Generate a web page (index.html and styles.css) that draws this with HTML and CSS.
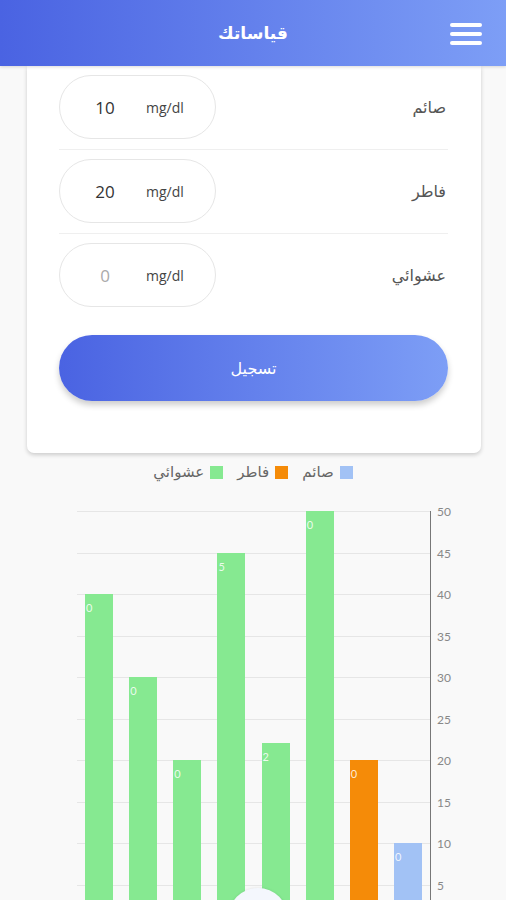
FILE: index.html
```html
<!DOCTYPE html>
<html lang="ar">
<head>
<meta charset="UTF-8">
<title>قياساتك</title>
<link rel="stylesheet" href="styles.css">
</head>
<body>
<div class="header">
  <h1>قياساتك</h1>
  <button class="menu" aria-label="menu"><span></span><span></span><span></span></button>
</div>

<div class="card">
  <div class="row">
    <div class="pill"><span class="value">10</span><span class="unit">mg/dl</span></div>
    <label>صائم</label>
  </div>
  <div class="row">
    <div class="pill"><span class="value">20</span><span class="unit">mg/dl</span></div>
    <label>فاطر</label>
  </div>
  <div class="row last">
    <div class="pill"><span class="value empty">0</span><span class="unit">mg/dl</span></div>
    <label>عشوائي</label>
  </div>
  <button class="submit">تسجيل</button>
</div>

<div class="chart">
  <div class="legend">
    <div class="item"><i class="sw blue"></i>صائم</div>
    <div class="item"><i class="sw orange"></i>فاطر</div>
    <div class="item"><i class="sw green"></i>عشوائي</div>
  </div>
  <div class="plot-area">
    <div class="plot">
      <div class="slot"><div class="bar green" style="height:332px"><span>0</span></div></div>
      <div class="slot"><div class="bar green" style="height:249px"><span>0</span></div></div>
      <div class="slot"><div class="bar green" style="height:166px"><span>0</span></div></div>
      <div class="slot"><div class="bar green" style="height:373px"><span>5</span></div></div>
      <div class="slot"><div class="bar green" style="height:183px"><span>2</span></div></div>
      <div class="slot"><div class="bar green" style="height:415px"><span>0</span></div></div>
      <div class="slot"><div class="bar orange" style="height:166px"><span>0</span></div></div>
      <div class="slot"><div class="bar blue" style="height:83px"><span>0</span></div></div>
    </div>
    <div class="axis">
      <span>50</span><span>45</span><span>40</span><span>35</span><span>30</span>
      <span>25</span><span>20</span><span>15</span><span>10</span><span>5</span>
    </div>
  </div>
</div>

<div class="fab"></div>
</body>
</html>
```

FILE: styles.css
```css
body { margin: 0; background: #f9f9f9; font-family: "Open Sans", "DejaVu Sans", sans-serif; color: #444; overflow: hidden; }

.header { height: 66px; background: linear-gradient(to right, #4a63e2, #7d9ef6); display: flex; align-items: center; justify-content: center; position: relative; box-shadow: 0 1px 3px rgba(0,0,0,0.15); }
.header h1 { margin: 0; color: #fff; font-size: 17px; font-weight: bold; font-family: "DejaVu Sans", sans-serif; }
.menu { position: absolute; right: 24px; top: 23px; width: 32px; height: 22px; padding: 0; border: 0; background: none; display: flex; flex-direction: column; justify-content: space-between; }
.menu span { display: block; height: 4px; border-radius: 2px; background: #fff; }

.card { margin: 0 25px 0 27px; background: #fff; border-radius: 0 0 7px 7px; box-shadow: 0 2px 4px rgba(0,0,0,0.18); padding: 0 33px 52px 32px; }
.row { display: flex; align-items: center; justify-content: space-between; padding: 9px 0 10px; border-bottom: 1px solid #efefef; }
.row.last { border-bottom: 0; }
.row label { font-size: 16px; color: #555; font-family: "DejaVu Sans", sans-serif; margin-right: 2px; }
.pill { width: 125px; height: 62px; border: 1px solid #e6e6e6; border-radius: 32px; display: flex; align-items: center; padding-left: 30px; }
.pill .value { width: 30px; text-align: center; font-size: 17px; color: #333; }
.pill .value.empty { color: #aaa; }
.pill .unit { margin-left: 26px; font-size: 14px; color: #444; }

.submit { display: block; width: 100%; height: 66px; margin-top: 18px; border: 0; border-radius: 33px; background: linear-gradient(to right, #4a63e2, #7d9ef6); color: #fff; font-size: 16px; font-family: "DejaVu Sans", sans-serif; box-shadow: 0 4px 6px rgba(0,0,0,0.2); }

.chart { padding-top: 10px; }
.legend { display: flex; direction: rtl; justify-content: center; gap: 14px; font-size: 15px; color: #666; font-family: "DejaVu Sans", sans-serif; }
.legend .item { display: flex; align-items: center; gap: 6px; }
.sw { display: inline-block; width: 13px; height: 13px; }
.sw.blue, .bar.blue { background: #a2c2f5; }
.sw.orange, .bar.orange { background: #f58b08; }
.sw.green, .bar.green { background: #86e991; }

.plot-area { display: flex; margin-top: 30px; }
.plot { margin-left: 77px; width: 353px; height: 415px; display: flex; align-items: flex-end; background: repeating-linear-gradient(to bottom, #e6e6e6 0 1px, transparent 1px 41.5px); }
.slot { flex: 1; display: flex; justify-content: center; align-items: flex-end; height: 100%; }
.bar { width: 28px; }
.bar span { display: block; margin: 7px 0 0 1px; font-size: 11px; color: rgba(255,255,255,0.85); font-family: "Lato", sans-serif; }
.axis { border-left: 1.5px solid #777; height: 415px; display: flex; flex-direction: column; padding-left: 6px; }
.axis span { flex-shrink: 0; height: 41.5px; line-height: 14px; margin-top: -6px; margin-bottom: 6px; font-size: 12px; color: #888; font-family: "Lato", sans-serif; }

.fab { position: absolute; left: 228px; top: 888px; width: 60px; height: 60px; border-radius: 50%; background: #f4f7fd; box-shadow: 0 0 3px rgba(0,0,0,0.1); }
```
